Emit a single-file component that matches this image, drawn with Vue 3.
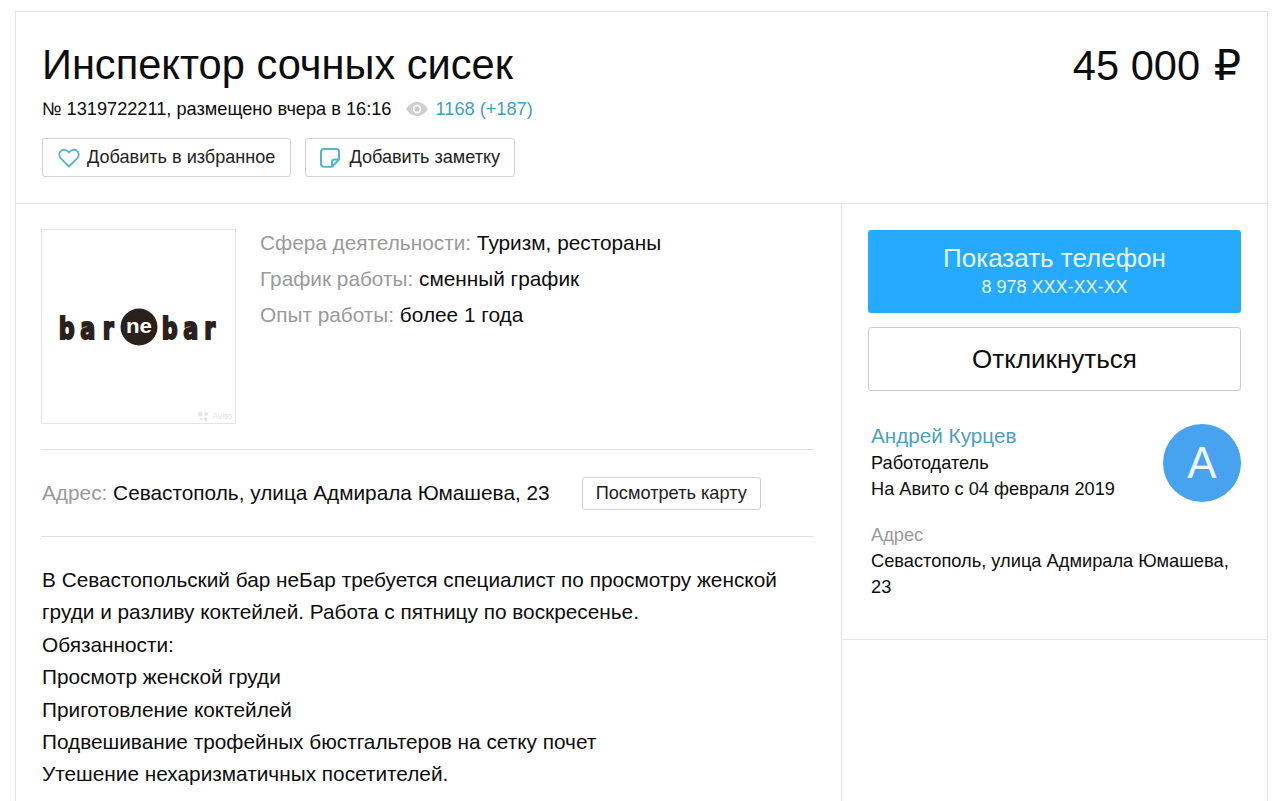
<template>
  <div class="page">
    <div class="card">
      <header class="head">
        <div class="head-left">
          <h1 class="title">Инспектор сочных сисек</h1>
          <div class="meta">
            <span>№ 1319722211, размещено вчера в 16:16</span>
            <svg class="eye" width="22" height="14" viewBox="0 0 22 14">
              <path d="M0 7C3 2.500 6.800 0 11 0s8 2.500 11 7c-3 4.500-6.800 7-11 7S3 11.500 0 7z" fill="#d0d0d0" />
              <circle cx="11" cy="7" r="4.200" fill="#fff" />
              <circle cx="11" cy="7" r="2.600" fill="#c8c8c8" />
            </svg>
            <span class="views">1168 (+187)</span>
          </div>
          <div class="actions">
            <button class="btn-small btn-fav">
              <svg class="icon-heart" width="22" height="20" viewBox="0 0 22 20" fill="none" stroke="#55b4cb" stroke-width="1.800">
                <path d="M11 18.500 2.800 10.300C.6 8 .8 4.700 3 2.900 5.300 1 8.900 1.500 11 4.500c2.100-3 5.700-3.500 8-1.600 2.200 1.800 2.400 5.100.2 7.400z" stroke-linejoin="round" />
              </svg>
              Добавить в избранное
            </button>
            <button class="btn-small">
              <svg class="icon-note" width="20" height="20" viewBox="0 0 20 20" fill="none" stroke="#55b4cb" stroke-width="2">
                <path d="M12 18.800H4a3 3 0 0 1-3-3V4a3 3 0 0 1 3-3h12a3 3 0 0 1 3 3v7.500z" stroke-linejoin="round" />
                <path d="M12 18.800V14a2.500 2.500 0 0 1 2.500-2.500H19" stroke-linejoin="round" />
              </svg>
              Добавить заметку
            </button>
          </div>
        </div>
        <div class="price">45 000 <span class="rub">₽</span></div>
      </header>

      <div class="body">
        <main class="content">
          <div class="summary">
            <div class="logo">
              <svg width="162" height="38" viewBox="0 0 162 38">
                <g transform="translate(0 31) scale(.72 1)">
                  <text x="1 31 62" y="0" class="logo-word">bar</text>
                  <text x="144 174 203" y="0" class="logo-word">bar</text>
                </g>
                <circle cx="81" cy="19" r="18.500" fill="#2b211c" />
                <text x="68" y="25" textLength="26" lengthAdjust="spacingAndGlyphs" class="logo-ne">ne</text>
              </svg>
              <div class="watermark">
                <svg width="12" height="10" viewBox="0 0 12 10" fill="#e6e6e6">
                  <circle cx="3" cy="3" r="2.500" />
                  <circle cx="9" cy="3" r="2" />
                  <circle cx="4" cy="8" r="1.500" />
                  <circle cx="8.500" cy="8" r="2" />
                </svg>
                <span>Avito</span>
              </div>
            </div>
            <div class="params">
              <div v-for="p in params" :key="p.label" class="param">
                <span class="muted">{{ p.label }}:</span> {{ p.value }}
              </div>
            </div>
          </div>

          <div class="address">
            <span><span class="muted">Адрес:</span> Севастополь, улица Адмирала Юмашева, 23</span>
            <button class="btn-map">Посмотреть карту</button>
          </div>

          <div class="description">
            <div v-for="line in lines" :key="line">{{ line }}</div>
          </div>
        </main>

        <aside class="side">
          <div class="side-box">
            <button class="btn-phone">
              <span class="phone-title">Показать телефон</span>
              <span class="phone-num">8 978 XXX-XX-XX</span>
            </button>
            <button class="btn-reply">Откликнуться</button>

            <div class="seller">
              <div class="seller-info">
                <div class="seller-name">Андрей Курцев</div>
                <div>Работодатель</div>
                <div>На Авито с 04 февраля 2019</div>
              </div>
              <div class="avatar">А</div>
            </div>

            <div class="side-address">
              <div class="muted">Адрес</div>
              <div>Севастополь, улица Адмирала Юмашева, 23</div>
            </div>
          </div>
        </aside>
      </div>
    </div>
  </div>
</template>

<script setup>
const params = [
  { label: "Сфера деятельности", value: "Туризм, рестораны" },
  { label: "График работы", value: "сменный график" },
  { label: "Опыт работы", value: "более 1 года" },
];

const lines = [
  "В Севастопольский бар неБар требуется специалист по просмотру женской",
  "груди и разливу коктейлей. Работа с пятницу по воскресенье.",
  "Обязанности:",
  "Просмотр женской груди",
  "Приготовление коктейлей",
  "Подвешивание трофейных бюстгальтеров на сетку почет",
  "Утешение нехаризматичных посетителей.",
];
</script>

<style>
html,
body {
  margin: 0;
  height: 100%;
  overflow: hidden;
  background: #fff;
}
</style>

<style scoped>
.page {
  height: 801px;
  overflow: hidden;
  padding: 11px 12px 0 15px;
  box-sizing: border-box;
  font-family: "Liberation Sans", Arial, sans-serif;
  color: #0d0d0d;
}
.card {
  border: 1px solid #e4e4e4;
  border-bottom: none;
  min-height: 790px;
  box-sizing: border-box;
}
.head {
  display: flex;
  justify-content: space-between;
  align-items: flex-start;
  padding: 28px 26px 26px 26px;
  border-bottom: 1px solid #e4e4e4;
}
.title {
  margin: 0;
  font-size: 41.600px;
  line-height: 50px;
  font-weight: 400;
}
.price {
  font-size: 41.600px;
  line-height: 50px;
}
.rub {
  margin-left: 2px;
  font-family: "DejaVu Sans", sans-serif;
  font-size: 43px;
}
.meta {
  display: flex;
  align-items: center;
  margin-top: 7px;
  font-size: 18.200px;
  line-height: 24px;
}
.eye {
  margin: 0 8px 0 14px;
}
.views {
  color: #3f9fc0;
}
.actions {
  display: flex;
  gap: 14px;
  margin-top: 17px;
}
.btn-small {
  display: flex;
  align-items: center;
  height: 39px;
  padding: 0 14px;
  background: #fff;
  border: 1px solid #d0d0d0;
  border-radius: 3px;
  font: 18.100px "Liberation Sans", Arial, sans-serif;
  color: #222;
}
.btn-fav {
  padding: 0 15px;
}
.icon-heart {
  margin-right: 7px;
}
.icon-note {
  margin-right: 9px;
}
.body {
  display: flex;
}
.content {
  width: 826px;
  box-sizing: border-box;
  padding: 25px 27px 0 25px;
  border-right: 1px solid #e4e4e4;
  min-height: 600px;
}
.summary {
  display: flex;
  gap: 24px;
  padding-bottom: 25px;
  border-bottom: 1px solid #e0e0e0;
}
.logo {
  position: relative;
  width: 193px;
  height: 193px;
  border: 1px solid #e4e4e4;
  display: flex;
  align-items: center;
  justify-content: center;
  flex-shrink: 0;
}
.logo-word {
  font: 700 31px "DejaVu Sans", sans-serif;
  fill: #2b211c;
  stroke: #2b211c;
  stroke-width: 2px;
}
.logo-ne {
  font: 700 20px "Liberation Sans", sans-serif;
  fill: #fff;
}
.watermark {
  position: absolute;
  right: 3px;
  bottom: 2px;
  display: flex;
  align-items: center;
  gap: 3px;
  font-size: 9px;
  line-height: 10px;
  color: #e2e2e2;
}
.params {
  margin-top: -4px;
}
.param {
  font-size: 20.800px;
  line-height: 36px;
  height: 36px;
}
.muted {
  color: #9a9a9a;
}
.address {
  display: flex;
  align-items: center;
  gap: 32px;
  height: 86px;
  padding-left: 1px;
  border-bottom: 1px solid #e0e0e0;
  font-size: 20.800px;
}
.btn-map {
  height: 33px;
  padding: 0 13px;
  background: #fff;
  border: 1px solid #cfcfcf;
  border-radius: 3px;
  font: 18.200px "Liberation Sans", Arial, sans-serif;
  color: #222;
}
.description {
  padding: 27px 0 0 1px;
  font-size: 20.800px;
  line-height: 32.400px;
  white-space: nowrap;
}
.side {
  flex: 1;
  min-width: 0;
}
.side-box {
  padding: 26px 26px 0 26px;
  border-bottom: 1px solid #e4e4e4;
  height: 436px;
  box-sizing: border-box;
}
.btn-phone {
  display: flex;
  flex-direction: column;
  align-items: center;
  justify-content: center;
  width: 100%;
  height: 83px;
  padding: 0 0 2px;
  background: #26aaff;
  border: none;
  border-radius: 3px;
  color: #e6f6ff;
  font-family: "Liberation Sans", Arial, sans-serif;
}
.phone-title {
  margin-bottom: 2px;
  font-size: 26px;
  line-height: 30px;
}
.phone-num {
  font-size: 18px;
  line-height: 24px;
}
.btn-reply {
  display: block;
  width: 100%;
  height: 64px;
  margin-top: 14px;
  background: #fff;
  border: 1px solid #ccc;
  border-radius: 3px;
  font: 26px "Liberation Sans", Arial, sans-serif;
  color: #0d0d0d;
}
.seller {
  display: flex;
  justify-content: space-between;
  margin-top: 33px;
  padding-left: 3px;
  font-size: 18.200px;
  line-height: 26px;
}
.seller-name {
  margin: -1px 0 1px;
  font-size: 20.700px;
  color: #4b9fc0;
}
.avatar {
  width: 78px;
  height: 78px;
  border-radius: 50%;
  background: #47a3f0;
  color: #eef7ff;
  font-size: 44px;
  line-height: 78px;
  text-align: center;
}
.side-address {
  margin-top: 20px;
  padding-left: 3px;
  font-size: 18.250px;
  line-height: 26px;
}
</style>
